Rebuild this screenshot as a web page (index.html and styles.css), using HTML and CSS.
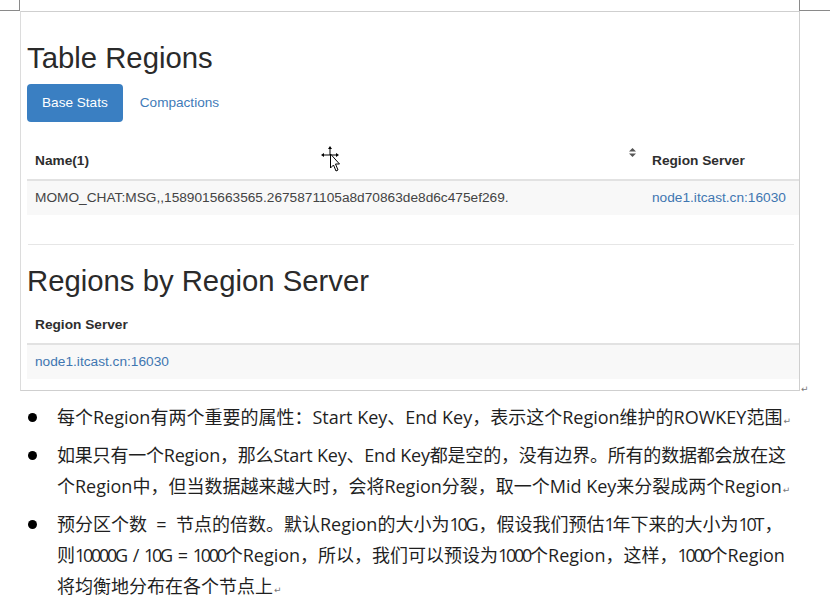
FILE: index.html
```html
<!DOCTYPE html>
<html lang="zh">
<head>
<meta charset="utf-8">
<title>Table Regions</title>
<link rel="stylesheet" href="styles.css">
</head>
<body>
<div class="marks">
  <div class="mark-left"></div>
  <div class="mark-right"></div>
</div>
<div class="frame-row">
  <div class="frame">
    <h1 class="title">Table Regions</h1>
    <div class="tabs">
      <span class="tab active">Base Stats</span>
      <span class="tab">Compactions</span>
    </div>
    <table class="grid first">
      <thead>
        <tr>
          <th class="col-name">Name(1)
            <svg class="sort" width="7" height="9" viewBox="0 0 7 9"><polygon points="3.5,0 7,3.5 0,3.5" fill="#555"/><polygon points="3.5,9 7,5.5 0,5.5" fill="#555"/></svg>
          </th>
          <th>Region Server</th>
        </tr>
      </thead>
      <tbody>
        <tr>
          <td>MOMO_CHAT:MSG,,1589015663565.2675871105a8d70863de8d6c475ef269.</td>
          <td><span class="link">node1.itcast.cn:16030</span></td>
        </tr>
      </tbody>
    </table>
    <hr class="rule">
    <h1 class="title second">Regions by Region Server</h1>
    <table class="grid">
      <thead>
        <tr><th>Region Server</th></tr>
      </thead>
      <tbody>
        <tr><td><span class="link">node1.itcast.cn:16030</span></td></tr>
      </tbody>
    </table>
    <svg class="cursor" width="20" height="28" viewBox="0 0 20 28">
      <g stroke="#000" stroke-width="1" fill="none">
        <line x1="9" y1="2" x2="9" y2="9"/>
        <line x1="2" y1="9" x2="16" y2="9"/>
      </g>
      <polygon points="9,0 7,3 11,3" fill="#000"/>
      <polygon points="0,9 3,7 3,11" fill="#000"/>
      <polygon points="18,9 15,7 15,11" fill="#000"/>
      <polygon points="9.5,8 9.5,22 12.5,19 15,25 17,24 14.5,18 18.5,18" fill="#fff" stroke="#000" stroke-width="1" stroke-linejoin="round"/>
    </svg>
  </div>
  <span class="ret ret-frame">↵</span>
</div>
<ul class="points">
  <li><span class="dot"></span><span class="txt">每个Region有两个重要的属性：Start Key、End Key，表示这个Region维护的ROWKEY范围<span class="ret">↵</span></span></li>
  <li><span class="dot"></span><span class="txt"><span class="tight">如果只有一个Region，那么Start Key、End Key都是空的，没有边界。所有的数据都会放在这</span><br>个Region中，但当数据越来越大时，会将Region分裂，取一个Mid Key来分裂成两个Region<span class="ret">↵</span></span></li>
  <li><span class="dot"></span><span class="txt">预分区个数 &nbsp;= &nbsp;节点的倍数。默认Region的大小为<span class="num">10</span>G，假设我们预估<span class="num">1</span>年下来的大小为<span class="num">10</span>T，<br>则<span class="num">10000</span>G / <span class="num">10</span>G = <span class="num">1000</span>个Region，所以，我们可以预设为<span class="num">1000</span>个Region，这样，<span class="num">1000</span>个Region<br>将均衡地分布在各个节点上<span class="ret">↵</span></span></li>
</ul>
</body>
</html>
```
FILE: styles.css
```css
html, body {
  margin: 0;
  padding: 0;
  background: #fff;
}
body {
  width: 838px;
  height: 609px;
  overflow: hidden;
  font-family: "Liberation Sans", Arial, sans-serif;
  color: #333;
}
.marks {
  display: flex;
  justify-content: space-between;
  height: 11px;
  padding-right: 8px;
}
.mark-left {
  width: 19px;
  height: 10px;
  border-right: 1px solid #8a8a8a;
  border-bottom: 1px solid #8a8a8a;
}
.mark-right {
  width: 30px;
  height: 10px;
  border-left: 1px solid #8a8a8a;
  border-bottom: 1px solid #8a8a8a;
}
.frame-row {
  display: flex;
  align-items: flex-end;
  margin-left: 20px;
}
.frame {
  position: relative;
  width: 772px;
  padding: 0 0 11px 6px;
  border: 1px solid #cfcfcf;
  border-left-color: #dcdcdc;
  background: #fff;
}
.title {
  margin: 30px 0 0;
  font-size: 29.3px;
  line-height: 32px;
  font-weight: normal;
  color: #2a2a2a;
}
.title.second {
  margin-top: 20px;
}
.tabs {
  display: flex;
  gap: 2px;
  margin-top: 10px;
}
.tab {
  display: block;
  height: 38px;
  line-height: 38px;
  padding: 0 15px;
  font-size: 13.6px;
  color: #3f7bb8;
  border-radius: 4px;
}
.tab.active {
  background: #3a7fc2;
  color: #fff;
}
.grid {
  width: 772px;
  border-collapse: collapse;
  margin-top: 21px;
  font-size: 13.7px;
}
.grid.first {
  margin-bottom: 29px;
}
.title.second + .grid {
  margin-top: 10px;
}
.grid th {
  position: relative;
  text-align: left;
  font-weight: bold;
  padding: 8px;
  line-height: 20px;
  border-bottom: 2px solid #e2e2e2;
  color: #2e2e2e;
}
.grid .col-name {
  width: 601px;
}
.grid td {
  padding: 8px;
  line-height: 18px;
  background: #f8f8f8;
  color: #444;
}
.sort {
  position: absolute;
  top: 5px;
  right: 8px;
}
.link {
  color: #3f76b1;
}
.rule {
  margin: 0 5px 0 1px;
  border: 0;
  border-top: 1px solid #e6e6e6;
  height: 0;
}
.cursor {
  position: absolute;
  left: 300px;
  top: 134px;
}
.ret {
  font-family: "DejaVu Sans", sans-serif;
  font-size: 9px;
  color: #777;
  line-height: 1;
}
.ret-frame {
  margin-left: 1px;
  margin-bottom: -3px;
}
.points {
  list-style: none;
  margin: 11px 0 0;
  padding: 0 0 0 28px;
  font-family: "Open Sans", "Noto Sans CJK SC", sans-serif;
  font-size: 18px;
  color: #1f1f1f;
}
.points li {
  display: grid;
  grid-template-columns: 29px auto;
  line-height: 31px;
  margin-bottom: 7px;
}
.dot {
  width: 9px;
  height: 9px;
  margin-top: 11px;
  border-radius: 50%;
  background: #000;
}
.txt {
  white-space: nowrap;
}
.txt .ret {
  margin-left: 1px;
}
.num {
  letter-spacing: -2.3px;
}
.tight {
  letter-spacing: -0.2px;
}
```
